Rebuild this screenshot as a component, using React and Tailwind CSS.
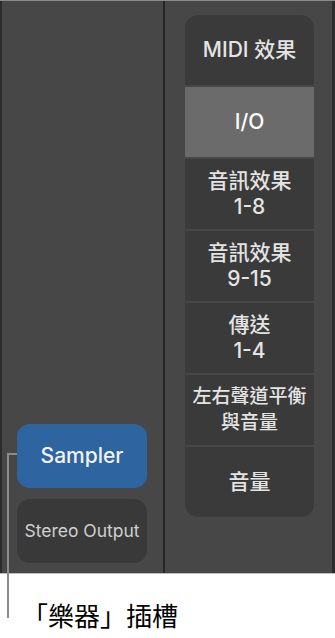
import React from "react";

const sections = [
  { lines: ["MIDI 效果"] },
  { lines: ["I/O"], active: true },
  { lines: ["音訊效果", "1-8"] },
  { lines: ["音訊效果", "9-15"] },
  { lines: ["傳送", "1-4"] },
  { lines: ["左右聲道平衡", "與音量"], small: true },
  { lines: ["音量"] },
];

export default function App() {
  return (
    <div
      className="relative w-[335px] h-[638px] bg-white overflow-hidden"
      style={{ fontFamily: 'Inter, "Noto Sans CJK TC", sans-serif' }}
    >
      {/* mixer strip */}
      <div className="flex h-[574px] border-t border-[#8a8a8a] border-b border-b-[#bdbdbd] bg-[#474747]">
        {/* instrument column */}
        <div className="flex w-[163px] flex-col justify-end gap-[11px] border-l-2 border-[#2c2c2c] pb-[10px] pl-[15px]">
          <div className="flex h-[64px] w-[130px] items-center justify-center rounded-[13px] bg-[#2e64a0] text-[21px] font-medium text-[#f2f2f2]">
            Sampler
          </div>
          <div className="flex h-[64px] w-[130px] items-center justify-center rounded-[13px] bg-[#393939] text-[17.5px] text-[#d0d0d0]">
            Stereo Output
          </div>
        </div>

        <div className="w-[2px] bg-[#262626]" />

        {/* section list */}
        <div className="flex-1 pl-[20px] pt-[14px]">
          <div className="flex w-[129px] flex-col gap-[2px] overflow-hidden rounded-[13px]">
            {sections.map((s, i) => (
              <div
                key={i}
                className={`flex h-[70px] flex-col items-center justify-center font-medium leading-[26px] ${
                  s.active ? "bg-[#6b6b6b] text-white" : "bg-[#3a3a3a] text-[#e4e4e4]"
                } ${s.small ? "text-[19px]" : "text-[21px]"}`}
              >
                {s.lines.map((l) => (
                  <span key={l}>{l}</span>
                ))}
              </div>
            ))}
          </div>
        </div>

        <div className="w-[3px] bg-[#2c2c2c]" />
      </div>

      {/* callout */}
      <div className="absolute left-[7px] top-[453px] h-[165px] w-[2px] bg-[#8c8c8c]" />
      <div className="absolute left-[7px] top-[453px] h-[2px] w-[10px] bg-[#8c8c8c]" />

      <div className="pl-[22px] pt-[26px] text-[26px] leading-[34px] text-black">
        「樂器」插槽
      </div>
    </div>
  );
}
